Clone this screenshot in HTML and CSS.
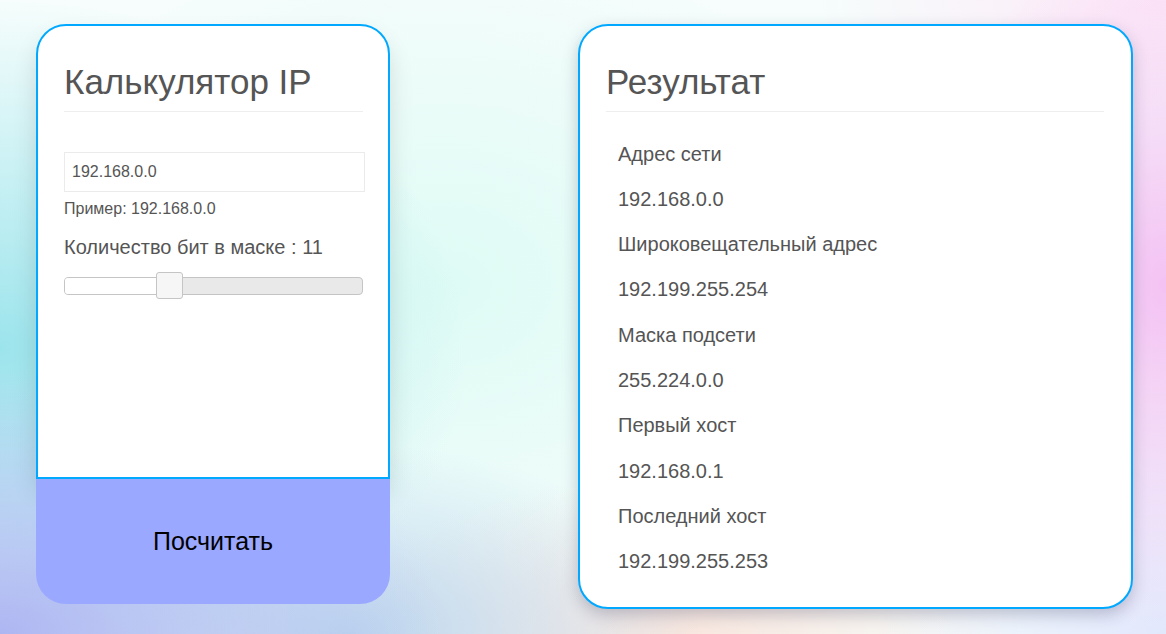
FILE: index.html
```html
<!DOCTYPE html>
<html lang="ru">
<head>
<meta charset="utf-8">
<title>Калькулятор IP</title>
<link rel="stylesheet" href="styles.css">
</head>
<body>
<main class="page">
  <section class="calc">
    <div class="calc-body">
      <h1 class="page-header">Калькулятор IP</h1>
      <input class="ip-input" type="text" value="192.168.0.0">
      <p class="help">Пример: 192.168.0.0</p>
      <p class="bits-label">Количество бит в маске : 11</p>
      <div class="slider">
        <span class="slider-fill" style="width: 34%"></span>
        <span class="slider-handle" style="left: 30.5%"></span>
      </div>
    </div>
    <button class="calc-btn" type="button">Посчитать</button>
  </section>

  <section class="result">
    <h1 class="page-header">Результат</h1>
    <ul class="result-list">
      <li>Адрес сети</li>
      <li>192.168.0.0</li>
      <li>Широковещательный адрес</li>
      <li>192.199.255.254</li>
      <li>Маска подсети</li>
      <li>255.224.0.0</li>
      <li>Первый хост</li>
      <li>192.168.0.1</li>
      <li>Последний хост</li>
      <li>192.199.255.253</li>
    </ul>
  </section>
</main>
</body>
</html>
```

FILE: styles.css
```css
* { box-sizing: border-box; }

html, body {
  margin: 0;
  height: 100%;
}

body {
  font-family: "Liberation Sans", Arial, sans-serif;
  color: #555;
  background-color: #f6fdfc;
  background-image:
    radial-gradient(ellipse 38% 42% at 0% 100%, rgba(174, 182, 242, 1) 0%, rgba(174, 182, 242, 0) 100%),
    radial-gradient(ellipse 30% 30% at 30% 100%, rgba(182, 210, 236, 0.9) 0%, rgba(182, 210, 236, 0) 100%),
    radial-gradient(ellipse 40% 55% at 0% 55%, rgba(156, 228, 236, 1) 0%, rgba(156, 228, 236, 0) 100%),
    radial-gradient(ellipse 22% 55% at 100% 45%, rgba(244, 194, 243, 1) 0%, rgba(244, 194, 243, 0) 100%),
    radial-gradient(ellipse 25% 40% at 100% 100%, rgba(226, 232, 252, 1) 0%, rgba(226, 232, 252, 0) 100%),
    radial-gradient(ellipse 30% 20% at 100% 0%, rgba(253, 232, 247, 1) 0%, rgba(253, 232, 247, 0) 100%),
    radial-gradient(ellipse 30% 25% at 58% 100%, rgba(248, 230, 222, 1) 0%, rgba(248, 230, 222, 0) 100%),
    radial-gradient(ellipse 40% 55% at 38% 45%, rgba(214, 250, 242, 0.75) 0%, rgba(214, 250, 242, 0) 100%);
}

.page {
  display: flex;
  align-items: flex-start;
  gap: 188px;
  padding: 24px 0 0 36px;
}

.page-header {
  margin: 37px 0 20px;
  padding-bottom: 9px;
  border-bottom: 1px solid #eee;
  font-size: 35px;
  font-weight: 400;
  line-height: 1.1;
  color: #555;
}

/* left card */
.calc {
  width: 354px;
  display: flex;
  flex-direction: column;
}

.calc-body {
  height: 455px;
  background: #fff;
  border: 2px solid #00a9ff;
  border-radius: 30px 30px 0 0;
  padding: 0 25px 0 26px;
  box-shadow: 0 14px 24px rgba(0, 0, 0, 0.12);
}

.ip-input {
  display: block;
  width: 301px;
  height: 40px;
  margin: 40px 0 0;
  padding: 0 7px;
  border: 1px solid #ebebeb;
  font-family: inherit;
  font-size: 16px;
  color: #555;
  background: #fff;
  outline: none;
}

.help {
  margin: 7px 0 0;
  font-size: 16px;
  line-height: 20px;
}

.bits-label {
  margin: 15px 0 0;
  font-size: 20px;
  line-height: 26px;
}

.slider {
  position: relative;
  width: 299px;
  height: 18px;
  margin-top: 17px;
  background: #e9e9e9;
  border: 1px solid #c5c5c5;
  border-radius: 4px;
}

.slider-fill {
  position: absolute;
  left: 0;
  top: 0;
  bottom: 0;
  background: #fff;
  border-radius: 3px 0 0 3px;
}

.slider-handle {
  position: absolute;
  top: -6px;
  width: 27px;
  height: 27px;
  background: #f6f6f6;
  border: 1px solid #c5c5c5;
  border-radius: 3px;
}

.calc-btn {
  height: 125px;
  border: 0;
  border-radius: 0 0 30px 30px;
  background: #9ba8ff;
  color: #000;
  font-family: inherit;
  font-size: 25px;
  padding: 0;
}

/* right card */
.result {
  width: 555px;
  height: 585px;
  background: #fff;
  border: 2px solid #00a9ff;
  border-radius: 30px;
  padding: 0 27px 0 26px;
  box-shadow: 0 6px 16px rgba(40, 40, 80, 0.25);
}

.result-list {
  list-style: none;
  margin: 7px 0 0;
  padding: 0;
}

.result-list li {
  padding: 10px 12px;
  font-size: 20px;
  line-height: 25.3px;
}
```
